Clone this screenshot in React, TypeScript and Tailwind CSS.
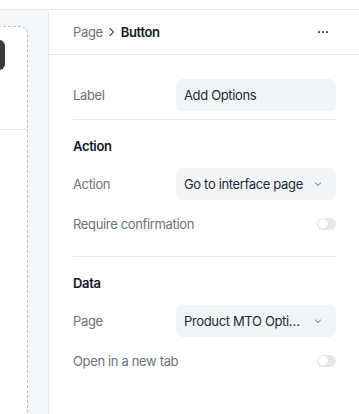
import React from "react";

function Chevron() {
  return (
    <svg width="10" height="10" viewBox="0 0 10 10" fill="none" className="shrink-0">
      <path d="M2.5 4L5 6.5L7.5 4" stroke="#9ca3af" strokeWidth="1.1" strokeLinecap="round" strokeLinejoin="round" />
    </svg>
  );
}

function Toggle() {
  return (
    <div className="w-[19px] h-[12px] rounded-full bg-[#e5e7eb] flex items-center p-[1px]">
      <div className="w-[10px] h-[10px] rounded-full bg-white shadow-[0_1px_1px_rgba(0,0,0,0.08)]" />
    </div>
  );
}

function FieldRow({ label, children }: { label: string; children: React.ReactNode }) {
  return (
    <div className="flex items-center h-8">
      <div className="w-[103px] shrink-0 text-[#6b7280]">{label}</div>
      {children}
    </div>
  );
}

function SelectBox({ value }: { value: string }) {
  return (
    <div className="w-[160px] h-8 rounded-md bg-[#f3f4f7] flex items-center pl-2 pr-[13px] gap-[6px] min-w-0">
      <span className="flex-1 min-w-0 truncate text-[#1f2937]">{value}</span>
      <Chevron />
    </div>
  );
}

function ToggleRow({ label }: { label: string }) {
  return (
    <div className="flex items-center justify-between h-6 mt-3">
      <span className="text-[#6b7280]">{label}</span>
      <Toggle />
    </div>
  );
}

export default function App() {
  return (
    <div
      className="w-[359px] h-[414px] bg-white overflow-hidden flex flex-col text-[13px] leading-5 tracking-[-0.35px]"
      style={{ fontFamily: "Inter, 'Noto Sans', sans-serif" }}
    >
      <div className="h-[10px] shrink-0 bg-white border-b border-[#e5e7eb]" />
      <div className="flex flex-1 min-h-0">
        <div className="w-[49px] shrink-0 bg-[#f5f6f8] border-r border-[#e5e7eb] pt-4 overflow-hidden">
          <div className="-ml-[10px] w-[38px] h-[500px] bg-white border border-dashed border-[#b9c0cf] rounded-lg">
            <div className="h-[103px] border-b border-[#e5e7eb] pt-[13px] flex justify-end pr-[22px]">
              <div className="w-[30px] h-[30px] rounded-md bg-[#3a3a3c]" />
            </div>
          </div>
        </div>
        <div className="flex-1 flex flex-col min-w-0">
          <div className="h-[45px] shrink-0 border-b border-[#e5e7eb] flex items-center pl-6 pr-[31px]">
            <div className="flex items-center gap-[5px] flex-1">
              <span className="text-[#6b7280]">Page</span>
              <svg width="8" height="10" viewBox="0 0 8 10" fill="none">
                <path d="M2 1.5L5.5 5L2 8.5" stroke="#4b5563" strokeWidth="1.2" strokeLinecap="round" strokeLinejoin="round" />
              </svg>
              <span className="font-semibold text-[#111827]">Button</span>
            </div>
            <svg width="10" height="4" viewBox="0 0 10 4" fill="#374151">
              <rect x="0" y="1" width="2" height="2" rx="0.4" />
              <rect x="4" y="1" width="2" height="2" rx="0.4" />
              <rect x="8" y="1" width="2" height="2" rx="0.4" />
            </svg>
          </div>
          <div className="pl-6 pr-[23px] pt-6">
            <FieldRow label="Label">
              <div className="w-[160px] h-8 rounded-md bg-[#f3f4f7] flex items-center px-2 text-[#1f2937]">Add Options</div>
            </FieldRow>
            <div className="mt-2 border-t border-[#e5e7eb]" />
            <div className="pt-4 pb-5 border-b border-[#e5e7eb]">
              <div className="h-5 font-semibold text-[#111827]">Action</div>
              <div className="mt-3">
                <FieldRow label="Action">
                  <SelectBox value="Go to interface page" />
                </FieldRow>
              </div>
              <ToggleRow label="Require confirmation" />
            </div>
            <div className="pt-4">
              <div className="h-5 font-semibold text-[#111827]">Data</div>
              <div className="mt-3">
                <FieldRow label="Page">
                  <SelectBox value="Product MTO Options" />
                </FieldRow>
              </div>
              <ToggleRow label="Open in a new tab" />
            </div>
          </div>
        </div>
      </div>
    </div>
  );
}
